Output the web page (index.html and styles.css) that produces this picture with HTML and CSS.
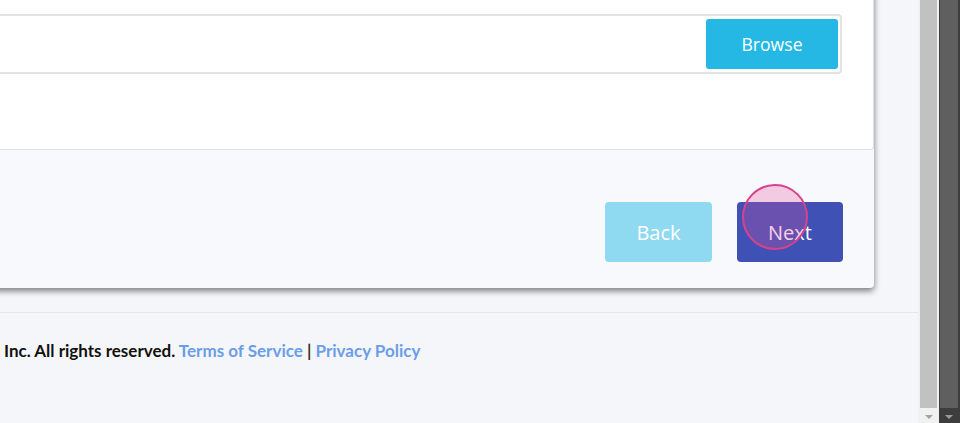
FILE: index.html
```html
<!DOCTYPE html>
<html>
<head>
<meta charset="utf-8">
<link rel="stylesheet" href="styles.css">
</head>
<body>
<div class="window">
  <div class="viewport">
    <div class="card">
      <div class="panel">
        <div class="file-group">
          <div class="file-name"></div>
          <button class="btn btn-browse">Browse</button>
        </div>
      </div>
      <div class="actions">
        <button class="btn btn-back">Back</button>
        <button class="btn btn-next">Next<span class="touch"></span></button>
      </div>
    </div>
    <footer class="footer">
      <p class="footer-text">Inc. All rights reserved. <a class="link" href="#">Terms of Service</a> <span class="sep">|</span> <a class="link" href="#">Privacy Policy</a></p>
    </footer>
  </div>
  <div class="scrollbar scrollbar-light">
    <div class="thumb"></div>
    <div class="arrow"></div>
  </div>
  <div class="scrollbar scrollbar-dark">
    <div class="thumb"></div>
    <div class="arrow"></div>
  </div>
</div>
</body>
</html>
```
FILE: styles.css
```css
html, body {
  margin: 0;
  padding: 0;
}
body {
  width: 960px;
  height: 423px;
  overflow: hidden;
  font-family: "Open Sans", "Noto Sans", sans-serif;
}
.window {
  display: flex;
  height: 423px;
}
.viewport {
  flex: 1;
  background: #f5f6fa;
  overflow: hidden;
  display: flex;
  flex-direction: column;
}
.card {
  margin: -20px 44px 0 -30px;
  background: #f8f9fc;
  border-radius: 4px;
  box-shadow: 0 3px 6px rgba(0, 0, 0, 0.5);
}
.panel {
  background: #fff;
  border: 1px solid #dbe0e6;
  border-top: none;
  border-radius: 0 0 4px 4px;
  padding: 34px 31px 75px 0;
}
.file-group {
  display: flex;
  align-items: center;
  justify-content: space-between;
  height: 56px;
  border: 2px solid #e3e3e3;
  border-radius: 4px;
  padding: 0 2px 0 0;
  background: #fff;
}
.btn {
  border: none;
  color: #fff;
  font-family: "Open Sans", "Noto Sans", sans-serif;
  border-radius: 4px;
  padding: 0;
  cursor: pointer;
}
.btn-browse {
  width: 132px;
  height: 50px;
  background: #25b8e5;
  font-size: 17.6px;
  border-radius: 3px;
}
.actions {
  display: flex;
  justify-content: flex-end;
  gap: 25px;
  padding: 52px 31px 26px 0;
}
.btn-back,
.btn-next {
  height: 60px;
  font-size: 20px;
}
.btn-back {
  width: 107px;
  background: #8fd9f1;
}
.btn-next {
  width: 106px;
  background: #3f51b5;
  position: relative;
}
.touch {
  position: absolute;
  left: 5px;
  top: -18px;
  width: 62px;
  height: 62px;
  border: 2px solid #d9418c;
  border-radius: 50%;
  background: rgba(225, 83, 158, 0.27);
}
.footer {
  margin-top: 24px;
  border-top: 1px solid #e4e6eb;
  padding: 26px 0 0 4px;
}
.footer-text {
  margin: 0;
  font-family: "Lato", "Noto Sans", sans-serif;
  font-weight: 700;
  font-size: 17px;
  line-height: 24px;
  color: #111;
  white-space: nowrap;
}
.link {
  color: #6b9ee9;
  text-decoration: none;
}
.sep {
  color: #3a3320;
}
.scrollbar {
  width: 21px;
  display: flex;
  flex-direction: column;
  align-items: stretch;
}
.scrollbar-light {
  background: #f1f1f1;
  padding: 0 2px;
  box-sizing: border-box;
}
.scrollbar-light .thumb {
  height: 408px;
  background: #c1c1c1;
}
.scrollbar-dark {
  background: #3d3d3d;
  padding: 0 2px 0 1px;
  box-sizing: border-box;
}
.scrollbar-dark .thumb {
  height: 408px;
  background: #5f5f5f;
}
.arrow {
  margin: 7px auto 0;
  width: 0;
  height: 0;
  border-left: 4.5px solid transparent;
  border-right: 4.5px solid transparent;
  border-top: 4.5px solid #a3a3a3;
}
.scrollbar-dark .arrow {
  border-top-color: #9b9b9b;
}
```
